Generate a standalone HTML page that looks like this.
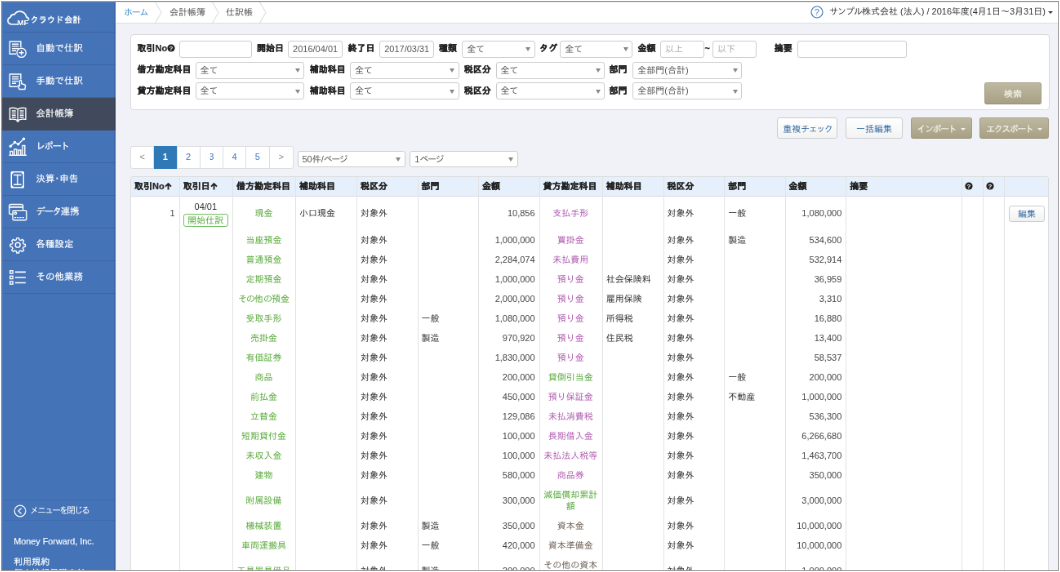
<!DOCTYPE html>
<html lang="ja">
<head>
<meta charset="utf-8">
<title>仕訳帳</title>
<style>
*{box-sizing:border-box;margin:0;padding:0}
html,body{width:1060px;height:572px;overflow:hidden;background:#fff}
body{position:relative;font-family:"Liberation Sans","IPAGothic","Noto Sans CJK JP",sans-serif;font-size:11px;color:#333}
#frame{position:absolute;left:0;top:0;will-change:transform;transform:translate(1.1px,1.1px);width:1057.5px;height:569.6px;border:1px solid #999;z-index:10;pointer-events:none}
#clip{position:absolute;left:0;top:0;width:1058px;height:571px;overflow:hidden}
#stage{position:absolute;left:0;top:0;width:1294px;height:699px;transform-origin:0 0;will-change:transform;transform:translate(1.3px,1.5px) scale(0.8165);background:#f0f2f7;overflow:hidden}
/* sidebar */
#side{position:absolute;left:0;top:0;width:140.4px;height:699px;background:#4573b8;color:#fff}
#side:after{content:"";position:absolute;right:0;top:0;width:2.5px;height:100%;background:rgba(0,0,30,0.09)}
#logo{height:38.3px;border-bottom:1px solid #3b65a6;position:relative}
#logo svg{position:absolute;left:7px;top:10.5px}
#logo span{position:absolute;left:35.5px;top:17px;font-size:10.2px;font-weight:bold;letter-spacing:0px;white-space:nowrap}
.mi{height:40px;border-bottom:1px solid #3b65a6;position:relative;font-size:11.5px;-webkit-text-stroke:0.15px #fff}
.mi svg{position:absolute;left:8px;top:8px}
u{text-decoration:none}
.k1{letter-spacing:-1.5px}
.k2{letter-spacing:-1px}
#logo u{margin-left:1px}
.mi span{position:absolute;left:42.5px;top:12.5px;white-space:nowrap}
.mi.act{background:#414a5c;border-bottom-color:#414a5c}
#close{position:absolute;left:0;top:609.5px;width:140px;height:26.4px;border-top:1px solid #3f6bb0;border-bottom:1px solid #3f6bb0;font-size:11px}
#close svg{position:absolute;left:15px;top:5px}
#close span{position:absolute;left:35px;top:6px;white-space:nowrap;letter-spacing:-2px}
.ft{-webkit-text-stroke:0.15px #fff;position:absolute;left:15.3px;font-size:11px;white-space:nowrap}
/* top bar */
#top{position:absolute;left:140px;top:0;width:1154px;height:27px;background:#fff;border-bottom:1px solid #dcdfe6}
.bc{position:absolute;top:7px;font-size:11px;color:#555;white-space:nowrap}
.bc.home{color:#3a87c8}
.chev{position:absolute;top:0}
#comp{position:absolute;right:15px;top:6px;font-size:11px;color:#333;white-space:nowrap}
#help{position:absolute;left:851px;top:5px}
#caret{position:absolute;left:1142px;top:12px;width:0;height:0;border:3.2px solid transparent;border-top:3.6px solid #333;border-bottom:0}
/* filter panel */
#panel{position:absolute;left:158px;top:40.4px;width:1125.8px;height:92.5px;background:#fff;border:1px solid #d9d9d9;border-radius:4px}
.lb{position:absolute;font-weight:bold;font-size:11px;color:#222;white-space:nowrap;-webkit-text-stroke:0.2px #222}
.in{position:absolute;height:21px;border:1px solid #ccc;border-radius:3px;background:#fff;font-size:11px;color:#555;padding:3px 0 0 5px;white-space:nowrap;overflow:hidden}
.in.ph{color:#aaa}
.sel:after{content:"";position:absolute;right:4.5px;top:7.5px;border:3.5px solid transparent;border-top:5px solid #888;border-bottom:0}
.btn{position:absolute;height:26px;border:1px solid #ccc;border-radius:3px;background:linear-gradient(#fff,#f3f3f3);color:#3a6ea5;font-size:11px;text-align:center;padding-top:7px;white-space:nowrap}
.btn.kh{background:linear-gradient(#bdb8a0,#a8a085);border-color:#aaa388 #a59e83 #958e70;color:#f3f1e8;-webkit-text-stroke:0.2px #f3f1e8}
.btn.kh i{display:inline-block;width:0;height:0;border:3.7px solid transparent;border-top-color:#f3f1e8;border-bottom:0;margin-left:6px;vertical-align:2px}
/* pagination */
#pag{position:absolute;left:158px;top:177.3px;height:27.5px;display:flex;border:1px solid #ddd;border-radius:3px;background:#fff}
#pag b{display:block;width:28.25px;height:100%;border-right:1px solid #ddd;text-align:center;font-weight:normal;color:#3d7ab8;font-size:11px;padding-top:6px}
#pag b:last-child{border-right:0}
#pag b.g{color:#888}
#pag b.on{background:#2f79b7;color:#fff;font-weight:bold;margin:-1px 0;padding-top:7px;height:calc(100% + 2px)}
/* table */
#tbl{position:absolute;left:158px;top:214px;width:1124.6px;height:500px;background:#fff;border:1px solid #dcdcdc;border-radius:3px 3px 0 0;overflow:hidden}
#th{position:absolute;left:0;top:0;width:100%;height:23.6px;background:#e6f0fc;border-bottom:1px solid #d5dbe3}
#th span{position:absolute;top:5px;font-weight:bold;font-size:11px;color:#222;white-space:nowrap;-webkit-text-stroke:0.2px #222}
.vl{position:absolute;top:0;width:1px;height:500px;background:#e2e2e2}
.r span{position:absolute;font-size:11px;line-height:14px;white-space:nowrap;color:#333}
.r .n{text-align:right;color:#444}
.r .c{text-align:center}
.r .badge{border:1px solid #6cbf5e;border-radius:3px;color:#5aaa3c;text-align:center;font-size:11px;height:16px;line-height:14px;background:#fff}
.r .ebtn{width:44px;height:20.2px;border:1px solid #ccc;border-radius:3px;background:linear-gradient(#fff,#f1f1f1);color:#3a6ea5;text-align:center;font-size:11px;line-height:18px}
.qi{margin-left:-0.5px;vertical-align:-1px}
#th em{font-style:normal;font-weight:bold;font-family:"DejaVu Sans",sans-serif;font-size:11px}
.r .g{color:#5aaa3c}
.r .p{color:#b05cb0}
.r .k{color:#6b5e55}
</style>
</head>
<body>
<div id="clip"><div id="stage">

<div id="side">
  <div id="logo">
    <svg width="30" height="20" viewBox="0 0 30 20"><path d="M12.500 17H6C3.200 17 1 15 1 12.500c0-2 1.300-3.700 3.200-4.300C4.800 5.800 6.800 4.600 9 5c1.400-2.400 4-3.900 6.800-3.900 4.100 0 7.400 3 7.900 6.800 1.500.5 2.600 1.600 3 3" fill="none" stroke="#fff" stroke-width="1.700" stroke-linecap="round"/><text x="12.600" y="18.200" font-size="9.600" font-weight="bold" fill="#fff" font-family="Liberation Sans, sans-serif">MF</text></svg>
    <span>クラウド<u>会計</u></span>
  </div>
  <div class="mi"><svg width="24" height="24" viewBox="0 0 24 24" stroke="#fff" stroke-width="1.4" fill="none"><path d="M10 18.300H2.400V3H15.900V10"/><path d="M5 6.200h8.300M5 8.900h8.300M5 11.600h8.300M5 14.300h5"/><circle cx="16.600" cy="16.800" r="5.600" fill="#4472b8"/><path d="M16.600 13.800v6M13.600 16.800h6"/></svg><span>自動で仕訳</span></div>
  <div class="mi"><svg width="24" height="24" viewBox="0 0 24 24" stroke="#fff" stroke-width="1.4" fill="none"><path d="M11.500 18.300H2.400V3H15.900V9.500"/><path d="M5 6.200h8.300M5 8.900h8.300M5 11.600h8.300M5 14.300h5"/><path d="M14 21.500l-1.500-3.500c-.3-.8.500-1.500 1.200-1l.8.600V11.500c0-1.500 2.200-1.500 2.200 0v3.300l3.600.9c.9.200 1.300.9 1.200 1.700l-.5 4.100z" fill="#4472b8" stroke-linejoin="round"/></svg><span>手動で仕訳</span></div>
  <div class="mi act"><svg width="24" height="24" viewBox="0 0 24 24" stroke="#fff" stroke-width="1.4" fill="none"><path d="M12.200 6C10 4.300 6.300 4 2.500 4.600V18.400c3.800-.6 7.500-.3 9.700 1.400 2.200-1.700 5.900-2 9.700-1.400V4.600C18.100 4 14.400 4.300 12.200 6zM12.200 6V19.800"/><path d="M4.800 8h5M4.800 10.600h5M4.800 13.200h5M4.800 15.800h5M14.600 8h5M14.600 10.600h5M14.600 13.200h5M14.600 15.800h5"/><path d="M10.700 20.200l1.500 1 1.500-1"/></svg><span>会計帳簿</span></div>
  <div class="mi"><svg width="24" height="24" viewBox="0 0 24 24" stroke="#fff" stroke-width="1.4" fill="none"><path d="M1.500 22.300h21.500"/><path d="M3 22.300v-4.800h2.800v4.800M8 22.300v-7.300h2.800v7.300M13 22.300v-6.300h2.800v6.300M18 22.300v-11.800h2.800v11.800"/><path d="M3.300 11.200l5.200-4.700 4.300 2.300 6.700-6.500"/><circle cx="3.300" cy="11.200" r="1" fill="#fff"/><circle cx="8.500" cy="6.500" r="1" fill="#fff"/><circle cx="12.800" cy="8.800" r="1" fill="#fff"/><circle cx="19.500" cy="2.300" r="1" fill="#fff"/></svg><span><u class="k1">レポート</u></span></div>
  <div class="mi"><svg width="24" height="24" viewBox="0 0 24 24" stroke="#fff" stroke-width="1.4" fill="none"><rect x="4.300" y="2.800" width="15" height="19" rx="1"/><path d="M7 6.500h9.600M7 18.200h9.600M11.800 6.500v11.700"/><circle cx="5.200" cy="3.700" r=".8" fill="#fff"/><circle cx="18.400" cy="3.700" r=".8" fill="#fff"/><circle cx="5.200" cy="20.900" r=".8" fill="#fff"/><circle cx="18.400" cy="20.900" r=".8" fill="#fff"/></svg><span>決算･申告</span></div>
  <div class="mi"><svg width="24" height="24" viewBox="0 0 24 24" stroke="#fff" stroke-width="1.4" fill="none"><rect x="1.800" y="2.500" width="16.800" height="12" rx="1.800"/><path d="M1.800 5.800h16.800" stroke-width="1.800"/><rect x="6" y="9.800" width="16.800" height="12" rx="1.800" fill="#4472b8"/><circle cx="9.300" cy="13.300" r="1.300"/><path d="M8 18.600h12.800" stroke-dasharray="2.200 1"/></svg><span><u class="k1">データ</u>連携</span></div>
  <div class="mi"><svg width="24" height="24" viewBox="0 0 24 24" stroke="#fff" stroke-width="1.4" fill="none" stroke-linejoin="round"><g transform="translate(12.2,12.2) scale(0.9) translate(-12.2,-12.2)" stroke-width="1.55"><circle cx="12.200" cy="12.200" r="3.300"/><path d="M10.700 2.700h3l.6 2.500 1.900.8 2.200-1.400 2.100 2.100-1.400 2.200.8 1.900 2.500.6v3l-2.500.6-.8 1.900 1.400 2.200-2.100 2.100-2.200-1.400-1.900.8-.6 2.500h-3l-.6-2.500-1.900-.8-2.200 1.400-2.100-2.100 1.400-2.200-.8-1.900-2.500-.6v-3l2.500-.6.800-1.900-1.400-2.200 2.100-2.100 2.200 1.400 1.900-.8z"/></g></svg><span>各種設定</span></div>
  <div class="mi"><svg width="24" height="24" viewBox="0 0 24 24" stroke="#fff" stroke-width="1.4" fill="none"><rect x="2.800" y="3.700" width="3.300" height="3.300"/><rect x="2.800" y="10.300" width="3.300" height="3.300"/><rect x="2.800" y="16.900" width="3.300" height="3.300"/><path d="M8.900 5.300h13M8.900 12h13M8.900 18.500h13" stroke-width="1.700"/></svg><span>その他業務</span></div>
  <div id="close"><svg width="16" height="16" viewBox="0 0 16 16" fill="none" stroke="#fff" stroke-width="1.200"><circle cx="8" cy="8" r="6.800"/><path d="M9.500 4.500L6 8l3.500 3.500"/></svg><span>メニューを閉じる</span></div>
  <div class="ft" style="top:654.8px;font-size:10.8px">Money Forward, Inc.</div>
  <div class="ft" style="top:679.7px">利用規約</div>
  <div class="ft" style="top:693.5px">個人情報保護方針</div>
</div>

<div id="top">
  <span class="bc home" style="left:10px;letter-spacing:-1.2px">ホーム</span>
  <svg class="chev" style="left:46.800px" width="10" height="27" viewBox="0 0 10 27"><path d="M1 0l8 13.500L1 27" fill="none" stroke="#d5d5d5" stroke-width="1"/></svg>
  <span class="bc" style="left:66px">会計帳簿</span>
  <svg class="chev" style="left:117px" width="10" height="27" viewBox="0 0 10 27"><path d="M1 0l8 13.500L1 27" fill="none" stroke="#d5d5d5" stroke-width="1"/></svg>
  <span class="bc" style="left:135px">仕訳帳</span>
  <svg class="chev" style="left:175px" width="10" height="27" viewBox="0 0 10 27"><path d="M1 0l8 13.500L1 27" fill="none" stroke="#d5d5d5" stroke-width="1"/></svg>
  <svg id="help" width="16" height="16" viewBox="0 0 16 16"><circle cx="8" cy="8" r="7" fill="#fff" stroke="#3f78c0" stroke-width="1.200"/><text x="8" y="12" font-size="10.500" text-anchor="middle" fill="#3f78c0" font-family="Liberation Sans, sans-serif">?</text></svg>
  <span id="comp"><u class="k2">サンプル</u>株式会社 (法人) / 2016年度(4月1日～3月31日)</span>
  <i id="caret"></i>
</div>

<div id="panel"></div>
<span class="lb" style="left:166.6px;top:51.3px">取引No<svg class="qi" width="10" height="10" viewBox="0 0 10 10"><circle cx="5" cy="5" r="4.600" fill="#222"/><text x="5" y="8" font-size="8" font-weight="bold" text-anchor="middle" fill="#fff" font-family="Liberation Sans, sans-serif">?</text></svg></span>
<span class="in " style="left:218.2px;top:47.8px;width:89.1px"></span>
<span class="lb" style="left:312.9px;top:51.3px">開始日</span>
<span class="in " style="left:351.1px;top:47.8px;width:67.0px">2016/04/01</span>
<span class="lb" style="left:424.4px;top:51.3px">終了日</span>
<span class="in " style="left:463.2px;top:47.8px;width:67.0px">2017/03/31</span>
<span class="lb" style="left:536.1px;top:51.3px">種類</span>
<span class="in sel" style="left:564.2px;top:47.8px;width:89.7px">全て</span>
<span class="lb" style="left:658.9px;top:51.3px">タグ</span>
<span class="in sel" style="left:684.2px;top:47.8px;width:89.1px">全て</span>
<span class="lb" style="left:779.5px;top:51.3px">金額</span>
<span class="in ph" style="left:807.0px;top:47.8px;width:53.6px">以上</span>
<span class="lb" style="left:861.6px;top:51.3px">~</span>
<span class="in ph" style="left:871.0px;top:47.8px;width:53.6px">以下</span>
<span class="lb" style="left:946.7px;top:51.3px">摘要</span>
<span class="in " style="left:974.5px;top:47.8px;width:134.1px"></span>
<span class="lb" style="left:166.6px;top:77.0px">借方勘定科目</span>
<span class="in sel" style="left:237.5px;top:73.5px;width:133.5px">全て</span>
<span class="lb" style="left:377.8px;top:77.0px">補助科目</span>
<span class="in sel" style="left:427.0px;top:73.5px;width:133.5px">全て</span>
<span class="lb" style="left:566.7px;top:77.0px">税区分</span>
<span class="in sel" style="left:605.5px;top:73.5px;width:133.5px">全て</span>
<span class="lb" style="left:744.6px;top:77.0px">部門</span>
<span class="in sel" style="left:773.3px;top:73.5px;width:133.8px">全部門(合計)</span>
<span class="lb" style="left:166.6px;top:102.7px">貸方勘定科目</span>
<span class="in sel" style="left:237.5px;top:99.2px;width:133.5px">全て</span>
<span class="lb" style="left:377.8px;top:102.7px">補助科目</span>
<span class="in sel" style="left:427.0px;top:99.2px;width:133.5px">全て</span>
<span class="lb" style="left:566.7px;top:102.7px">税区分</span>
<span class="in sel" style="left:605.5px;top:99.2px;width:133.5px">全て</span>
<span class="lb" style="left:744.6px;top:102.7px">部門</span>
<span class="in sel" style="left:773.3px;top:99.2px;width:133.8px">全部門(合計)</span>
<span class="btn kh" style="left:1203.6px;top:99.2px;width:70.9px;height:26.7px">検索</span>
<span class="btn " style="left:950.4px;top:142.1px;width:73.5px;height:25.7px">重複<u class="k1">チェック</u></span>
<span class="btn " style="left:1033.7px;top:142.1px;width:70.7px;height:25.7px">一括編集</span>
<span class="btn kh" style="left:1113.6px;top:142.1px;width:75.3px;height:25.7px"><u class="k1">インポート</u><i></i></span>
<span class="btn kh" style="left:1198.1px;top:142.1px;width:85.1px;height:25.7px"><u class="k1">エクスポート</u><i></i></span>
<span class="in sel" style="left:362.5px;top:182.8px;width:132px;height:20.5px">50件/<u class="k1">ページ</u></span>
<span class="in sel" style="left:500.3px;top:182.8px;width:132.3px;height:20.5px">1<u class="k1">ページ</u></span>
<div id="pag"><b class="g">&lt;</b><b class="on">1</b><b>2</b><b>3</b><b>4</b><b>5</b><b class="g">&gt;</b></div>
<div id="tbl"><div id="th">
<span style="left:4.0px">取引No<svg width="9" height="9" viewBox="0 0 9 9" style="vertical-align:-0.5px;margin-left:0.5px"><path d="M4.500 8.600V1.200M1 4.600l3.500-3.500 3.500 3.500" fill="none" stroke="#222" stroke-width="1.900"/></svg></span>
<span style="left:63.7px">取引日<svg width="9" height="9" viewBox="0 0 9 9" style="vertical-align:-0.5px;margin-left:0.5px"><path d="M4.500 8.600V1.200M1 4.600l3.500-3.500 3.500 3.500" fill="none" stroke="#222" stroke-width="1.900"/></svg></span>
<span style="left:128.9px">借方勘定科目</span>
<span style="left:206.1px">補助科目</span>
<span style="left:281.1px">税区分</span>
<span style="left:355.5px">部門</span>
<span style="left:429.9px">金額</span>
<span style="left:504.6px">貸方勘定科目</span>
<span style="left:581.8px">補助科目</span>
<span style="left:656.5px">税区分</span>
<span style="left:731.2px">部門</span>
<span style="left:805.6px">金額</span>
<span style="left:880.3px">摘要</span>
<span style="left:1021.4px;top:4.5px"><svg width="10" height="10" viewBox="0 0 10 10" style="vertical-align:-1px"><circle cx="5" cy="5" r="4.600" fill="#222"/><text x="5" y="8" font-size="8" font-weight="bold" text-anchor="middle" fill="#fff" font-family="Liberation Sans, sans-serif">?</text></svg></span>
<span style="left:1047.1px;top:4.5px"><svg width="10" height="10" viewBox="0 0 10 10" style="vertical-align:-1px"><circle cx="5" cy="5" r="4.600" fill="#222"/><text x="5" y="8" font-size="8" font-weight="bold" text-anchor="middle" fill="#fff" font-family="Liberation Sans, sans-serif">?</text></svg></span>
</div>
<i class="vl" style="left:58.7px"></i>
<i class="vl" style="left:123.9px"></i>
<i class="vl" style="left:201.1px"></i>
<i class="vl" style="left:276.1px"></i>
<i class="vl" style="left:350.5px"></i>
<i class="vl" style="left:424.9px"></i>
<i class="vl" style="left:499.6px"></i>
<i class="vl" style="left:576.8px"></i>
<i class="vl" style="left:651.5px"></i>
<i class="vl" style="left:726.2px"></i>
<i class="vl" style="left:800.6px"></i>
<i class="vl" style="left:875.3px"></i>
<i class="vl" style="left:1016.8px"></i>
<i class="vl" style="left:1042.5px"></i>
<i class="vl" style="left:1069.1px"></i>
<div class="r">
<span class="n" style="left:-1.0px;width:54.7px;top:37.0px">1</span>
<span class="c" style="left:58.7px;width:65.2px;top:28.5px">04/01</span>
<span class="badge" style="left:63.7px;width:55.2px;top:45.0px">開始仕訳</span>
<span class="ebtn" style="left:1074.9px;top:35.2px">編集</span>
<span class="c g" style="left:123.9px;width:77.2px;top:37.0px">現金</span>
<span style="left:206.1px;top:37.0px">小口現金</span>
<span style="left:281.1px;top:37.0px">対象外</span>
<span class="n" style="left:424.9px;width:69.7px;top:37.0px">10,856</span>
<span class="c p" style="left:499.6px;width:77.2px;top:37.0px">支払手形</span>
<span style="left:656.5px;top:37.0px">対象外</span>
<span style="left:731.2px;top:37.0px">一般</span>
<span class="n" style="left:800.6px;width:69.7px;top:37.0px">1,080,000</span>
</div>
<div class="r">
<span class="c g" style="left:123.9px;width:77.2px;top:69.5px">当座預金</span>
<span style="left:281.1px;top:69.5px">対象外</span>
<span class="n" style="left:424.9px;width:69.7px;top:69.5px">1,000,000</span>
<span class="c p" style="left:499.6px;width:77.2px;top:69.5px">買掛金</span>
<span style="left:656.5px;top:69.5px">対象外</span>
<span style="left:731.2px;top:69.5px">製造</span>
<span class="n" style="left:800.6px;width:69.7px;top:69.5px">534,600</span>
</div>
<div class="r">
<span class="c g" style="left:123.9px;width:77.2px;top:93.5px">普通預金</span>
<span style="left:281.1px;top:93.5px">対象外</span>
<span class="n" style="left:424.9px;width:69.7px;top:93.5px">2,284,074</span>
<span class="c p" style="left:499.6px;width:77.2px;top:93.5px">未払費用</span>
<span style="left:656.5px;top:93.5px">対象外</span>
<span class="n" style="left:800.6px;width:69.7px;top:93.5px">532,914</span>
</div>
<div class="r">
<span class="c g" style="left:123.9px;width:77.2px;top:117.5px">定期預金</span>
<span style="left:281.1px;top:117.5px">対象外</span>
<span class="n" style="left:424.9px;width:69.7px;top:117.5px">1,000,000</span>
<span class="c p" style="left:499.6px;width:77.2px;top:117.5px">預り金</span>
<span style="left:581.8px;top:117.5px">社会保険料</span>
<span style="left:656.5px;top:117.5px">対象外</span>
<span class="n" style="left:800.6px;width:69.7px;top:117.5px">36,959</span>
</div>
<div class="r">
<span class="c g" style="left:123.9px;width:77.2px;top:141.5px"><u class="k2">その</u>他<u class="k2">の</u>預金</span>
<span style="left:281.1px;top:141.5px">対象外</span>
<span class="n" style="left:424.9px;width:69.7px;top:141.5px">2,000,000</span>
<span class="c p" style="left:499.6px;width:77.2px;top:141.5px">預り金</span>
<span style="left:581.8px;top:141.5px">雇用保険</span>
<span style="left:656.5px;top:141.5px">対象外</span>
<span class="n" style="left:800.6px;width:69.7px;top:141.5px">3,310</span>
</div>
<div class="r">
<span class="c g" style="left:123.9px;width:77.2px;top:165.5px">受取手形</span>
<span style="left:281.1px;top:165.5px">対象外</span>
<span style="left:355.5px;top:165.5px">一般</span>
<span class="n" style="left:424.9px;width:69.7px;top:165.5px">1,080,000</span>
<span class="c p" style="left:499.6px;width:77.2px;top:165.5px">預り金</span>
<span style="left:581.8px;top:165.5px">所得税</span>
<span style="left:656.5px;top:165.5px">対象外</span>
<span class="n" style="left:800.6px;width:69.7px;top:165.5px">16,880</span>
</div>
<div class="r">
<span class="c g" style="left:123.9px;width:77.2px;top:189.5px">売掛金</span>
<span style="left:281.1px;top:189.5px">対象外</span>
<span style="left:355.5px;top:189.5px">製造</span>
<span class="n" style="left:424.9px;width:69.7px;top:189.5px">970,920</span>
<span class="c p" style="left:499.6px;width:77.2px;top:189.5px">預り金</span>
<span style="left:581.8px;top:189.5px">住民税</span>
<span style="left:656.5px;top:189.5px">対象外</span>
<span class="n" style="left:800.6px;width:69.7px;top:189.5px">13,400</span>
</div>
<div class="r">
<span class="c g" style="left:123.9px;width:77.2px;top:213.5px">有価証券</span>
<span style="left:281.1px;top:213.5px">対象外</span>
<span class="n" style="left:424.9px;width:69.7px;top:213.5px">1,830,000</span>
<span class="c p" style="left:499.6px;width:77.2px;top:213.5px">預り金</span>
<span style="left:656.5px;top:213.5px">対象外</span>
<span class="n" style="left:800.6px;width:69.7px;top:213.5px">58,537</span>
</div>
<div class="r">
<span class="c g" style="left:123.9px;width:77.2px;top:237.5px">商品</span>
<span style="left:281.1px;top:237.5px">対象外</span>
<span class="n" style="left:424.9px;width:69.7px;top:237.5px">200,000</span>
<span class="c g" style="left:499.6px;width:77.2px;top:237.5px">貸倒引当金</span>
<span style="left:656.5px;top:237.5px">対象外</span>
<span style="left:731.2px;top:237.5px">一般</span>
<span class="n" style="left:800.6px;width:69.7px;top:237.5px">200,000</span>
</div>
<div class="r">
<span class="c g" style="left:123.9px;width:77.2px;top:261.5px">前払金</span>
<span style="left:281.1px;top:261.5px">対象外</span>
<span class="n" style="left:424.9px;width:69.7px;top:261.5px">450,000</span>
<span class="c p" style="left:499.6px;width:77.2px;top:261.5px">預り保証金</span>
<span style="left:656.5px;top:261.5px">対象外</span>
<span style="left:731.2px;top:261.5px">不動産</span>
<span class="n" style="left:800.6px;width:69.7px;top:261.5px">1,000,000</span>
</div>
<div class="r">
<span class="c g" style="left:123.9px;width:77.2px;top:285.5px">立替金</span>
<span style="left:281.1px;top:285.5px">対象外</span>
<span class="n" style="left:424.9px;width:69.7px;top:285.5px">129,086</span>
<span class="c p" style="left:499.6px;width:77.2px;top:285.5px">未払消費税</span>
<span style="left:656.5px;top:285.5px">対象外</span>
<span class="n" style="left:800.6px;width:69.7px;top:285.5px">536,300</span>
</div>
<div class="r">
<span class="c g" style="left:123.9px;width:77.2px;top:309.5px">短期貸付金</span>
<span style="left:281.1px;top:309.5px">対象外</span>
<span class="n" style="left:424.9px;width:69.7px;top:309.5px">100,000</span>
<span class="c p" style="left:499.6px;width:77.2px;top:309.5px">長期借入金</span>
<span style="left:656.5px;top:309.5px">対象外</span>
<span class="n" style="left:800.6px;width:69.7px;top:309.5px">6,266,680</span>
</div>
<div class="r">
<span class="c g" style="left:123.9px;width:77.2px;top:333.5px">未収入金</span>
<span style="left:281.1px;top:333.5px">対象外</span>
<span class="n" style="left:424.9px;width:69.7px;top:333.5px">100,000</span>
<span class="c p" style="left:499.6px;width:77.2px;top:333.5px">未払法人税等</span>
<span style="left:656.5px;top:333.5px">対象外</span>
<span class="n" style="left:800.6px;width:69.7px;top:333.5px">1,463,700</span>
</div>
<div class="r">
<span class="c g" style="left:123.9px;width:77.2px;top:357.5px">建物</span>
<span style="left:281.1px;top:357.5px">対象外</span>
<span class="n" style="left:424.9px;width:69.7px;top:357.5px">580,000</span>
<span class="c p" style="left:499.6px;width:77.2px;top:357.5px">商品券</span>
<span style="left:656.5px;top:357.5px">対象外</span>
<span class="n" style="left:800.6px;width:69.7px;top:357.5px">350,000</span>
</div>
<div class="r">
<span class="c g" style="left:123.9px;width:77.2px;top:388.8px">附属設備</span>
<span style="left:281.1px;top:388.8px">対象外</span>
<span class="n" style="left:424.9px;width:69.7px;top:388.8px">300,000</span>
<span class="c g" style="left:499.6px;width:77.2px;top:381.8px">減価償却累計<br>額</span>
<span style="left:656.5px;top:388.8px">対象外</span>
<span class="n" style="left:800.6px;width:69.7px;top:388.8px">3,000,000</span>
</div>
<div class="r">
<span class="c g" style="left:123.9px;width:77.2px;top:420.0px">機械装置</span>
<span style="left:281.1px;top:420.0px">対象外</span>
<span style="left:355.5px;top:420.0px">製造</span>
<span class="n" style="left:424.9px;width:69.7px;top:420.0px">350,000</span>
<span class="c k" style="left:499.6px;width:77.2px;top:420.0px">資本金</span>
<span style="left:656.5px;top:420.0px">対象外</span>
<span class="n" style="left:800.6px;width:69.7px;top:420.0px">10,000,000</span>
</div>
<div class="r">
<span class="c g" style="left:123.9px;width:77.2px;top:444.0px">車両運搬具</span>
<span style="left:281.1px;top:444.0px">対象外</span>
<span style="left:355.5px;top:444.0px">一般</span>
<span class="n" style="left:424.9px;width:69.7px;top:444.0px">420,000</span>
<span class="c k" style="left:499.6px;width:77.2px;top:444.0px">資本準備金</span>
<span style="left:656.5px;top:444.0px">対象外</span>
<span class="n" style="left:800.6px;width:69.7px;top:444.0px">10,000,000</span>
</div>
<div class="r">
<span class="c g" style="left:123.9px;width:77.2px;top:475.2px">工具器具備品</span>
<span style="left:281.1px;top:475.2px">対象外</span>
<span style="left:355.5px;top:475.2px">製造</span>
<span class="n" style="left:424.9px;width:69.7px;top:475.2px">200,000</span>
<span class="c k" style="left:499.6px;width:77.2px;top:468.2px">その他の資本<br>剰余金</span>
<span style="left:656.5px;top:475.2px">対象外</span>
<span class="n" style="left:800.6px;width:69.7px;top:475.2px">1,000,000</span>
</div>
</div>

</div></div>
<div id="frame"></div>
</body>
</html>
